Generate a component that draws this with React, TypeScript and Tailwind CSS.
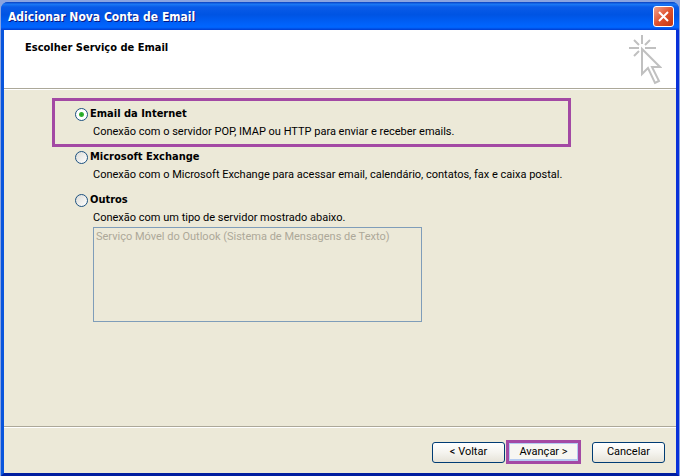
import React, { useState } from 'react';

interface ServiceOption {
  id: string;
  label: string;
  description: string;
}

const SERVICES: ServiceOption[] = [
  {
    id: 'internet',
    label: 'Email da Internet',
    description: 'Conexão com o servidor POP, IMAP ou HTTP para enviar e receber emails.',
  },
  {
    id: 'exchange',
    label: 'Microsoft Exchange',
    description: 'Conexão com o Microsoft Exchange para acessar email, calendário, contatos, fax e caixa postal.',
  },
  {
    id: 'others',
    label: 'Outros',
    description: 'Conexão com um tipo de servidor mostrado abaixo.',
  },
];

// Wrapper of each option, the first one is highlighted
const WRAPPERS: Record<string, string> = {
  internet: 'border-[3px] border-[#a349a4] pt-1 pb-[3px]',
  exchange: 'border-x-[3px] border-transparent pt-px',
  others: 'border-x-[3px] border-transparent pt-[7px]',
};

const BOLD = "font-['DejaVu_Sans_Condensed','DejaVu_Sans',sans-serif] font-bold";

const CursorLogo = () => (
  <svg width="34" height="50" viewBox="0 0 34 50" fill="none" stroke="#c0c0c0" strokeWidth="2" aria-hidden="true">
    <path d="M14 0v9M1 13h10M17 13h11M6 5l5 5M22 5l-5 5M6 21l5-5" />
    <path d="M14 14v25l6-6 7 15 4-2-7-14h8z" />
  </svg>
);

const CloseIcon = () => (
  <svg width="11" height="11" viewBox="0 0 11 11" stroke="#fff" strokeWidth="2" aria-hidden="true">
    <path d="M1 1l9 9M10 1l-9 9" />
  </svg>
);

const App: React.FC = () => {
  const [selected, setSelected] = useState('internet');

  const buttonClass =
    'h-[21px] w-[73px] rounded-[3px] border border-[#003c74] bg-gradient-to-b from-white via-[#f5f4ef] to-[#e6e3d8] text-center';

  return (
    <div className="flex min-h-screen flex-col bg-[#8ba4e0] px-px pt-[2px] font-[Roboto,sans-serif] text-[11px] leading-[18px] text-black">
      <div className="flex flex-1 flex-col overflow-hidden rounded-t-[7px] bg-[#0054e3]">
        {/* Title bar */}
        <header className="flex h-7 items-center justify-between bg-[linear-gradient(#0a3fc0_0%,#1b78f5_8%,#0a5be8_18%,#0054e3_45%,#0060f8_75%,#0066ff_90%,#003dd0_100%)] pr-[5px] pl-[7px]">
          <h1 className={`${BOLD} pt-px text-[12px] text-white [text-shadow:1px_1px_#0a1883]`}>
            Adicionar Nova Conta de Email
          </h1>
          <button
            type="button"
            aria-label="Fechar"
            className="flex size-[21px] items-center justify-center rounded-[3px] border border-white bg-gradient-to-br from-[#f0a08a] via-[#e0512c] to-[#c1360f]"
          >
            <CloseIcon />
          </button>
        </header>

        <main className="flex flex-1 flex-col border-x-[3px] border-b-[3px] border-r-[#0831d9] border-b-[#001ea0] border-l-[#0855dd] bg-[#ece9d8]">
          <div className="flex h-[59px] items-start justify-between border-b border-[#aca899] bg-white pt-[5px] pr-[14px] pl-[21px]">
            <h2 className={`${BOLD} pt-1`}>Escolher Serviço de Email</h2>
            <CursorLogo />
          </div>

          <div className="flex-1 border-t border-white pt-2 pr-[105px] pl-12">
            {SERVICES.map(service => (
              <div key={service.id} className={WRAPPERS[service.id]}>
                <div className="flex items-center gap-[2px] pl-5">
                  <input
                    type="radio"
                    id={service.id}
                    name="service"
                    checked={selected === service.id}
                    onChange={() => setSelected(service.id)}
                    aria-describedby={`${service.id}-desc`}
                    className="size-[13px] appearance-none rounded-full border border-[#1c5180] bg-gradient-to-br from-[#dcdcd7] to-white checked:bg-[radial-gradient(circle,#21a121_0,#35b535_2px,#fff_3px)]"
                  />
                  <label htmlFor={service.id} className={BOLD}>
                    {service.label}
                  </label>
                </div>
                <p id={`${service.id}-desc`} className="pl-[38px] whitespace-nowrap">
                  {service.description}
                </p>
              </div>
            ))}
            <div className="ml-[41px] w-[329px] border border-[#7f9db9]">
              <select
                size={5}
                disabled
                aria-label="Tipo de servidor"
                className="block h-[93px] w-full overflow-hidden bg-[#ece9d8] text-[#aca899] opacity-100"
              >
                <option className="px-[2px] pt-[2px] pb-0 text-[#aca899]">
                  Serviço Móvel do Outlook (Sistema de Mensagens de Texto)
                </option>
              </select>
            </div>
          </div>

          {/* Wizard buttons */}
          <footer className="border-t border-[#aca899]">
            <div className="flex items-center justify-end border-t border-white pt-3 pr-[11px] pb-[9px]">
              <button type="button" className={buttonClass}>
                &lt; Voltar
              </button>
              <div className="mr-[11px] ml-px flex border-[3px] border-[#a349a4]">
                <button type="button" className="h-[18px] w-[69px] border border-b-2 border-[#b4cbf2] bg-[#f7f6f2] leading-[14px]">
                  Avançar &gt;
                </button>
              </div>
              <button type="button" className={buttonClass}>
                Cancelar
              </button>
            </div>
          </footer>
        </main>
      </div>
    </div>
  );
};

export default App;
